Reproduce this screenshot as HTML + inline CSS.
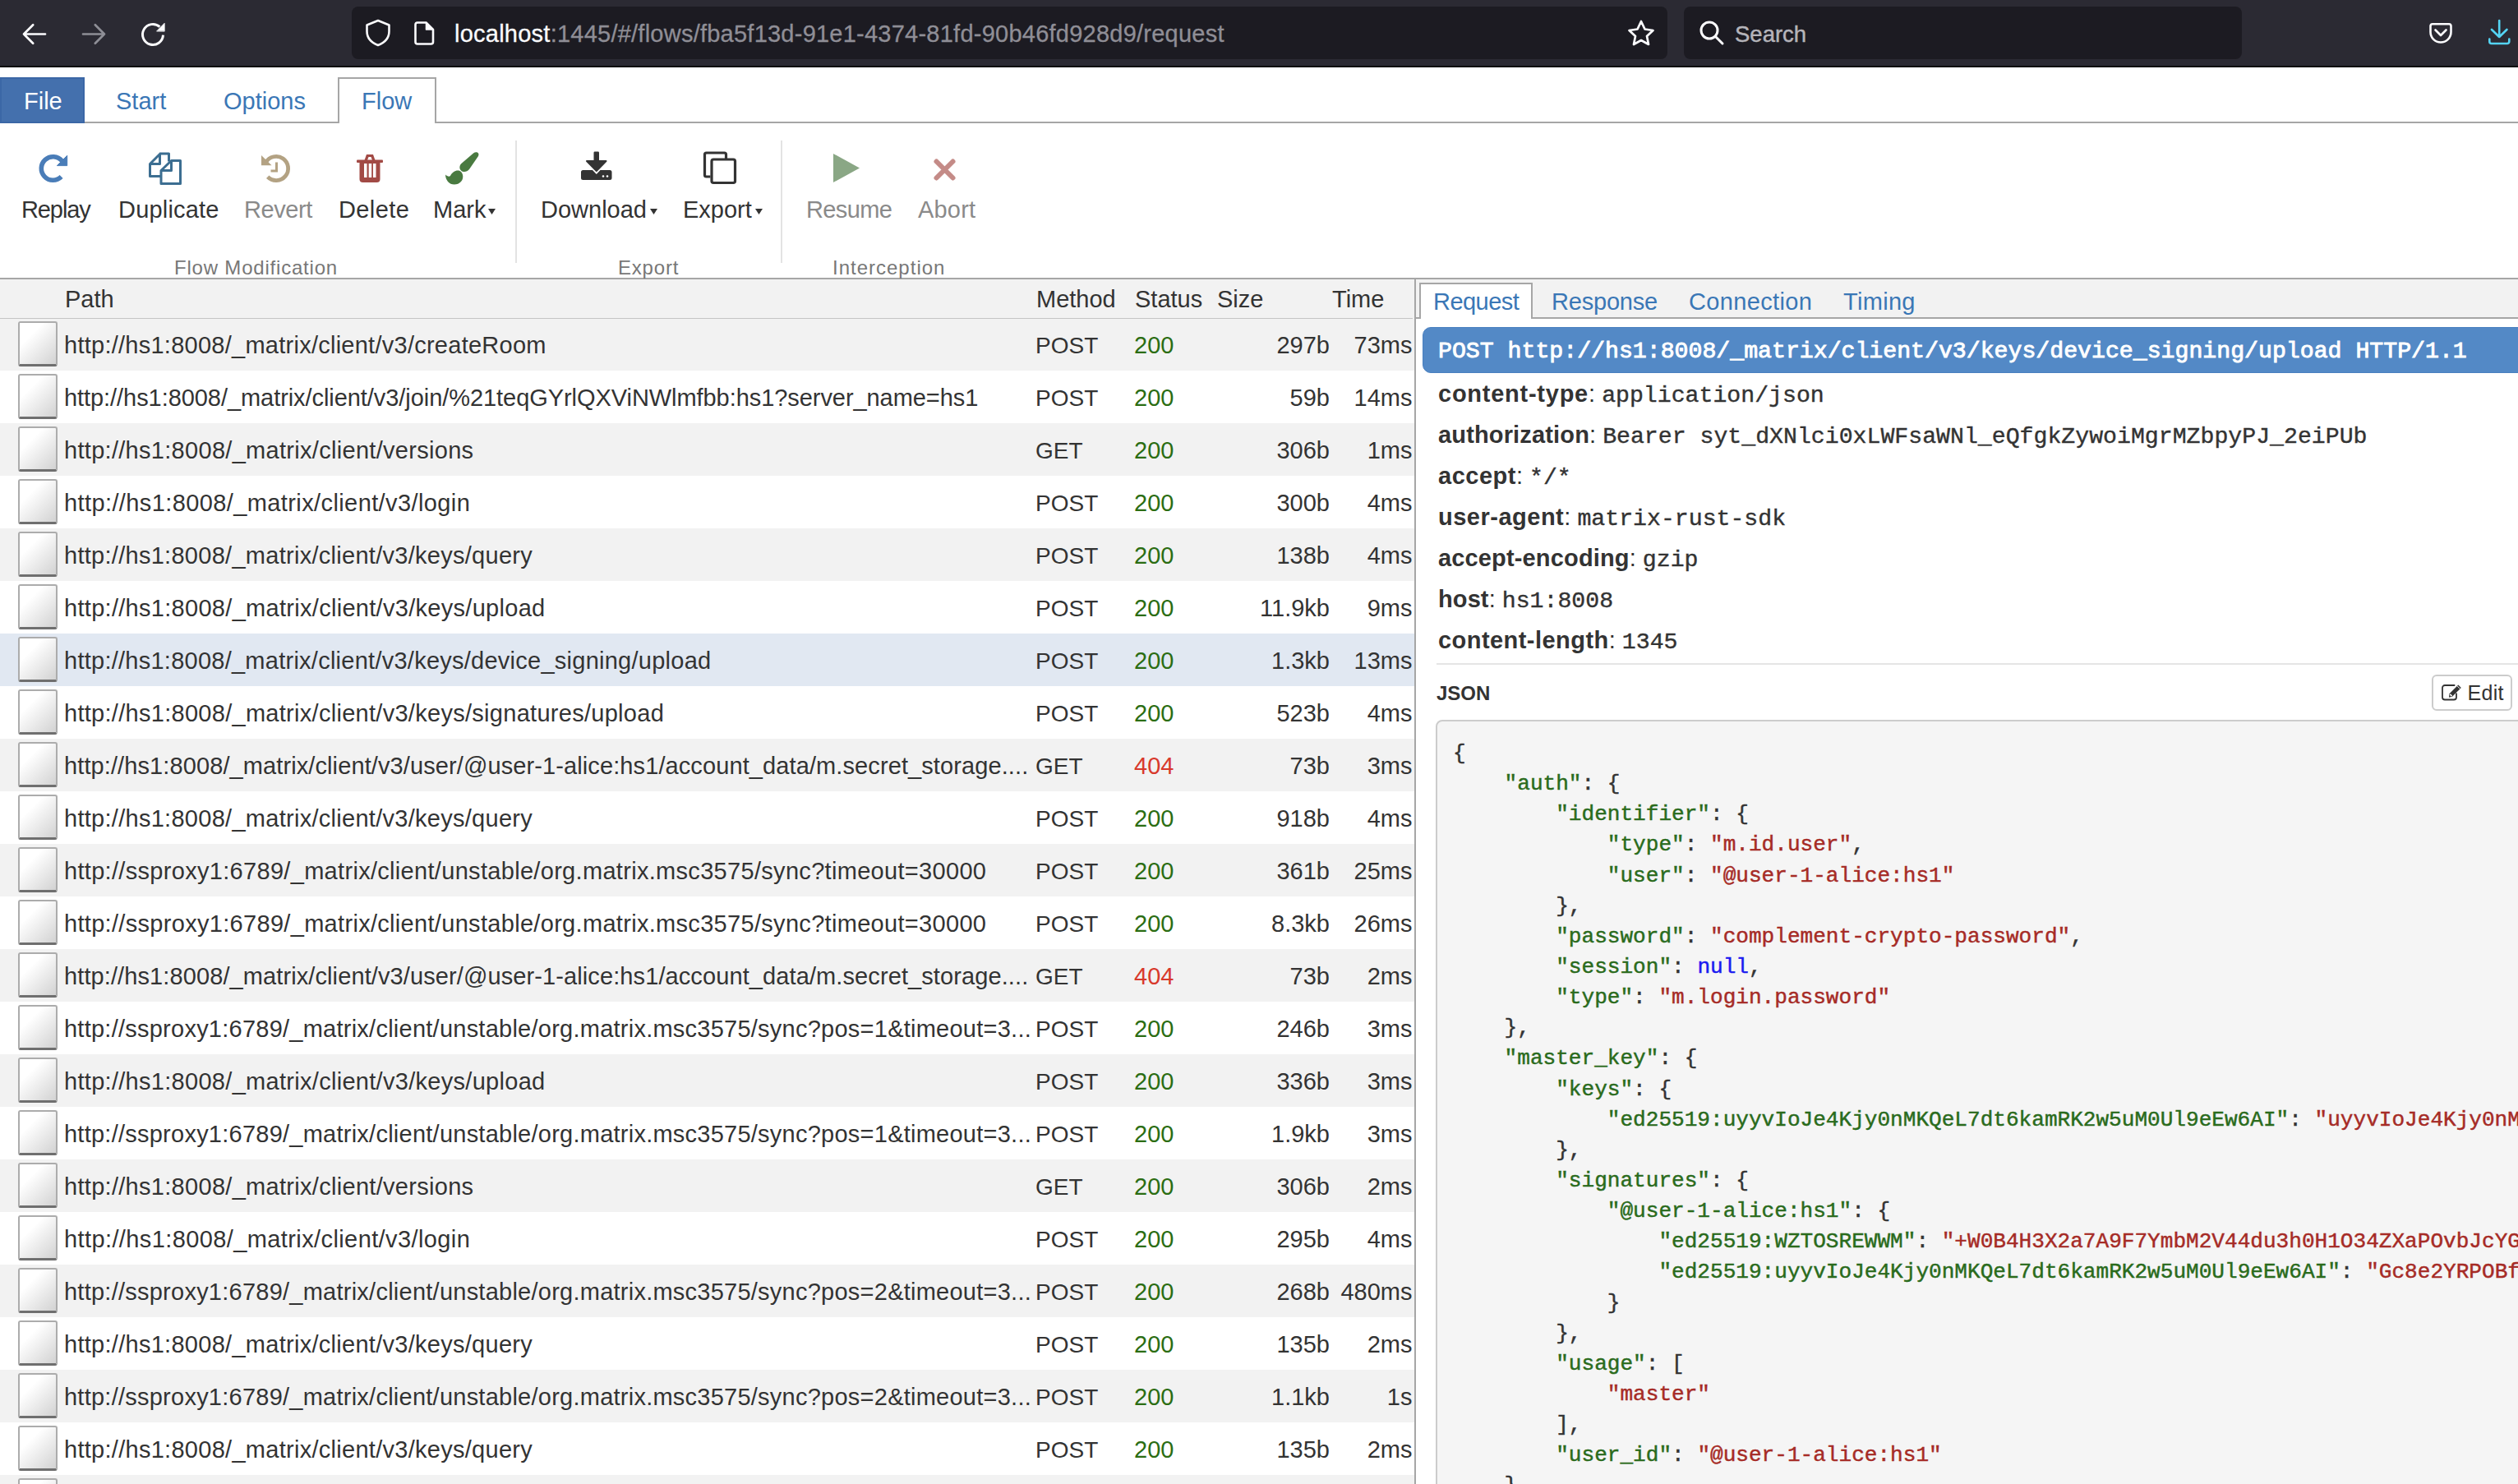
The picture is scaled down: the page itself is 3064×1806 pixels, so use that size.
<!DOCTYPE html>
<html><head><meta charset="utf-8"><style>
*{box-sizing:border-box;margin:0;padding:0}
html,body{width:3064px;height:1806px;overflow:hidden;background:#fff}
body{font-family:"Liberation Sans",sans-serif;color:#333;position:relative}
.a{position:absolute}
.tx{position:absolute;white-space:pre}
svg{position:absolute;overflow:visible}

.chk{position:absolute;left:22px;width:48px;height:55px;border-radius:3px;background:linear-gradient(135deg,#fff 30%,#d2d2d2 100%);border:2px solid #acacac;border-bottom:3px solid #6f6f6f}
.sz{text-align:right}
</style></head><body>
<div class="a" style="left:0;top:0;width:3064px;height:80px;background:#2b2a33"></div>
<div class="a" style="left:0;top:80px;width:3064px;height:2px;background:#0b0b0d"></div>
<div class="a" style="left:428px;top:8px;width:1601px;height:64px;background:#1c1b22;border-radius:8px"></div>
<div class="a" style="left:2049px;top:8px;width:679px;height:64px;background:#1c1b22;border-radius:8px"></div>
<svg style="left:0;top:0" width="3064" height="82"><g fill="none" stroke-linecap="round" stroke-linejoin="round" stroke-width="3.2"><path d="M29 41.5 H55 M40.2 30.3 L29 41.5 L40.2 52.7" stroke="#fbfbfe" stroke-width="2.7"/><path d="M101 41.5 H127 M115.8 30.3 L127 41.5 L115.8 52.7" stroke="#8e8e96" stroke-width="2.7"/><path d="M194.4 32.7 A12.5 12.5 0 1 0 198.5 42.7" stroke="#fbfbfe" stroke-width="3" stroke-linecap="butt"/><path d="M446.5 30.5 L460 25 L473.5 30.5 V38 C473.5 46.5 468 52 460 55 C452 52 446.5 46.5 446.5 38 Z" stroke="#fbfbfe" stroke-width="2.6"/><path d="M508 27.5 H518.5 L527 36 V51 A2.5 2.5 0 0 1 524.5 53.5 H508 A2.5 2.5 0 0 1 505.5 51 V30 A2.5 2.5 0 0 1 508 27.5 Z" stroke="#fbfbfe" stroke-width="2.6"/><path d="M518.5 27.5 L527 36 H518.5 Z" fill="#fbfbfe" stroke="#fbfbfe" stroke-width="1.5" stroke-linejoin="round"/><path d="M1997 26 L2001.5 35.5 L2011.5 37 L2004 44 L2006 54 L1997 49 L1988 54 L1990 44 L1982.5 37 L1992.5 35.5 Z" stroke="#fbfbfe" stroke-width="2.7"/><circle cx="2080" cy="37" r="10" stroke="#fbfbfe" stroke-width="3"/><path d="M2087.5 44.5 L2096 53" stroke="#fbfbfe" stroke-width="3"/><path d="M2960 29.3 H2980 A2.5 2.5 0 0 1 2982.5 31.8 V39 A12.5 12.5 0 0 1 2957.5 39 V31.8 A2.5 2.5 0 0 1 2960 29.3 Z M2963.5 36.5 L2970 43 L2976.5 36.5" stroke="#fbfbfe" stroke-width="2.6"/><path d="M3041.2 25 V45 M3032 36 L3041.2 45 L3050.4 36 M3029.3 47.5 V50.5 A2.5 2.5 0 0 0 3031.8 53 H3050.8 A2.5 2.5 0 0 0 3053.3 50.5 V47.5" stroke="#54d3f3" stroke-width="2.6"/><path d="M190.8 37.8 L200.2 28.2 L200.2 37.8 Z" fill="#fbfbfe" stroke="#fbfbfe" stroke-width="0.8" stroke-linejoin="miter"/></g></svg>

<div class="tx" style="left:553px;top:26.95px;font-size:29px;line-height:29px;color:#fbfbfe;letter-spacing:0.24px;-webkit-text-stroke:0.3px currentColor">localhost<span style="color:#8f8e96">:1445/#/flows/fba5f13d-91e1-4374-81fd-90b46fd928d9/request</span></div>
<div class="tx " style="left:2111px;top:27.92px;font-size:27.5px;line-height:27.5px;color:#b5b4ba;-webkit-text-stroke:0.45px #b5b4ba">Search</div>

<div class="a" style="left:0;top:148px;width:3064px;height:2px;background:#a6a6a6"></div>
<div class="a" style="left:0;top:94px;width:103px;height:56px;background:#4470ad;border:2px solid #3b67a6"></div>
<div class="a" style="left:411px;top:94px;width:120px;height:56px;background:#fff;border:2px solid #a6a6a6;border-bottom:none"></div>
<div class="tx " style="left:29px;top:109.45px;font-size:29px;line-height:29px;color:#fff">File</div>

<div class="tx " style="left:141px;top:109.45px;font-size:29px;line-height:29px;color:#3a77b6">Start</div>

<div class="tx " style="left:272px;top:109.45px;font-size:29px;line-height:29px;color:#3a77b6">Options</div>

<div class="tx " style="left:440px;top:109.45px;font-size:29px;line-height:29px;color:#3a77b6">Flow</div>

<div class="a" style="left:0;top:338px;width:3064px;height:2px;background:#a6a6a6"></div>
<div class="a" style="left:626.5px;top:171px;width:2px;height:149px;background:#e3e3e3"></div>
<div class="a" style="left:950px;top:171px;width:2px;height:149px;background:#e3e3e3"></div>
<div class="tx " style="left:26px;top:240.95px;font-size:29px;line-height:29px;color:#333;letter-spacing:-1.1px">Replay</div>

<div class="tx " style="left:144px;top:240.95px;font-size:29px;line-height:29px;color:#333;letter-spacing:0.2px">Duplicate</div>

<div class="tx " style="left:297px;top:240.95px;font-size:29px;line-height:29px;color:#8a8a8a;letter-spacing:-0.4px">Revert</div>

<div class="tx " style="left:412px;top:240.95px;font-size:29px;line-height:29px;color:#333;letter-spacing:0.4px">Delete</div>

<div class="tx " style="left:527px;top:240.95px;font-size:29px;line-height:29px;color:#333;letter-spacing:0px">Mark</div>

<div class="tx " style="left:658px;top:240.95px;font-size:29px;line-height:29px;color:#333;letter-spacing:0px">Download</div>

<div class="tx " style="left:831px;top:240.95px;font-size:29px;line-height:29px;color:#333;letter-spacing:0px">Export</div>

<div class="tx " style="left:981px;top:240.95px;font-size:29px;line-height:29px;color:#8a8a8a;letter-spacing:-0.6px">Resume</div>

<div class="tx " style="left:1117px;top:240.95px;font-size:29px;line-height:29px;color:#8a8a8a;letter-spacing:0.2px">Abort</div>

<svg style="left:594px;top:254px" width="10" height="8"><path d="M0 0 H9 L4.5 7 Z" fill="#333"/></svg>
<svg style="left:791px;top:254px" width="10" height="8"><path d="M0 0 H9 L4.5 7 Z" fill="#333"/></svg>
<svg style="left:919px;top:254px" width="10" height="8"><path d="M0 0 H9 L4.5 7 Z" fill="#333"/></svg>
<div class="tx " style="left:212px;top:313.68px;font-size:24px;line-height:24px;color:#777;letter-spacing:0.8px">Flow Modification</div>

<div class="tx " style="left:752px;top:313.68px;font-size:24px;line-height:24px;color:#777;letter-spacing:0.8px">Export</div>

<div class="tx " style="left:1013px;top:313.68px;font-size:24px;line-height:24px;color:#777;letter-spacing:1px">Interception</div>


<svg style="left:0;top:0" width="1200" height="340">
<!-- replay -->
<g fill="none" stroke="#4a7db8" stroke-width="5.6"><path d="M75.4 195.8 A14.25 14.25 0 1 0 74.6 215.1"/></g>
<path d="M69.4 201.6 L81.7 189.3 V201.6 Z" fill="#4a7db8" stroke="#4a7db8" stroke-width="1" stroke-linejoin="round"/>
<!-- duplicate -->
<g fill="none" stroke="#3c6e91" stroke-width="3" stroke-linejoin="round">
<path d="M194 187 H205.5 V196.5 M195 187 L182.5 199.5 V214.5 H196 M183 199.5 H194.5 V187"/>
<path d="M208.5 195.5 H219.5 V223.5 H196 V207.5 L208.5 195.5 Z M196.5 207.5 H208.5 V195.5"/>
</g>
<!-- revert (history) -->
<g fill="none" stroke="#b3a283" stroke-width="4.8"><path d="M323.4 197.7 A14.6 14.6 0 1 1 325.7 215.3"/></g>
<path d="M318 189 L330.6 201.2 H318 Z" fill="#b3a283"/>
<path d="M336.5 197.5 V208 H329.5" fill="none" stroke="#b3a283" stroke-width="3"/>
<!-- trash -->
<g fill="#a24a45">
<rect x="434" y="194.5" width="32" height="3.5" rx="1"/>
<path d="M443.5 195 L446 188 H454 L456.5 195 H453 L451.5 191 H448.5 L447 195 Z"/>
<path d="M437.5 198 H462.5 V218 A4 4 0 0 1 458.5 222 H441.5 A4 4 0 0 1 437.5 218 Z"/>
</g>
<g fill="#fff"><rect x="443" y="199" width="3.5" height="17"/><rect x="448.7" y="199" width="3.5" height="17"/><rect x="454" y="199" width="3.5" height="17"/></g>
<!-- brush -->
<path d="M576 186.5 C579.5 183.5 584 186 582 190 L571 206 C568.5 209.5 563.5 210 561 207.5 C558.5 205 559 201 562 198.5 Z" fill="#497a40"/>
<path d="M559.5 208 C564 210.5 564.5 217 561 221 C557 225.5 549 226 545 221 C543 218.5 542 215.5 542 212.5 C544 214.5 546.5 215.5 548 214 C550.5 209.5 555 206.5 559.5 208 Z" fill="#497a40"/>
<!-- download -->
<g fill="#333">
<rect x="722.5" y="184.5" width="6.5" height="14" rx="1.2"/>
<path d="M714 196 H737.5 L725.8 208 Z" stroke="#333" stroke-width="2" stroke-linejoin="round"/>
<path d="M709.5 207 H721 L725.8 212 L730.5 207 H742 A2.5 2.5 0 0 1 744.5 209.5 V216.5 A2.5 2.5 0 0 1 742 219 H709.5 A2.5 2.5 0 0 1 707 216.5 V209.5 A2.5 2.5 0 0 1 709.5 207 Z"/>
</g>
<circle cx="734" cy="214.5" r="1.3" fill="#fff"/><circle cx="739" cy="214.5" r="1.3" fill="#fff"/>
<!-- clone -->
<g fill="none" stroke="#333" stroke-width="3.2" stroke-linejoin="round">
<path d="M883.5 193 V188 A2 2 0 0 0 881.5 186 H859.5 A2 2 0 0 0 857.5 188 V213 A2 2 0 0 0 859.5 215 H864.5"/>
<rect x="866" y="194" width="28.5" height="28.5" rx="2.2"/>
</g>
<!-- play -->
<path d="M1014 187 L1046 204.5 L1014 222 Z" fill="#8aa785"/>
<!-- abort -->
<g stroke="#c48b87" stroke-width="6" stroke-linecap="round"><path d="M1139.5 196.5 L1159.5 216.5 M1159.5 196.5 L1139.5 216.5"/></g>
</svg>

<div class="a" style="left:0;top:340px;width:1721px;height:1466px;overflow:hidden">
<div class="a" style="left:0;top:0;width:1721px;height:47px;background:#f2f2f2"></div>
<div class="a" style="left:0;top:47px;width:1719px;height:1px;background:#c4c4c4;z-index:3"></div>
<div class="tx " style="left:79px;top:10.45px;font-size:29px;line-height:29px;">Path</div>

<div class="tx " style="left:1261px;top:10.45px;font-size:29px;line-height:29px;">Method</div>

<div class="tx " style="left:1381px;top:10.45px;font-size:29px;line-height:29px;">Status</div>

<div class="tx " style="left:1481px;top:10.45px;font-size:29px;line-height:29px;">Size</div>

<div class="tx " style="left:1621px;top:10.45px;font-size:29px;line-height:29px;">Time</div>

<div class="a" style="left:0;top:47px;width:1721px;height:64px;background:#f2f2f2"></div>
<div class="chk" style="top:51px"></div>
<div class="tx " style="left:78px;top:66.45px;font-size:29px;line-height:29px;letter-spacing:0.256px">http://hs1:8008/_matrix/client/v3/createRoom</div>

<div class="tx " style="left:1260px;top:67.30px;font-size:28px;line-height:28px;">POST</div>

<div class="tx " style="left:1380px;top:66.45px;font-size:29px;line-height:29px;color:#2b6d13">200</div>

<div class="tx " style="right:103px;top:66.45px;font-size:29px;line-height:29px;">297b</div>

<div class="tx " style="right:2.5px;top:66.45px;font-size:29px;line-height:29px;">73ms</div>

<div class="a" style="left:0;top:111px;width:1721px;height:64px;background:#fff"></div>
<div class="chk" style="top:115px"></div>
<div class="tx " style="left:78px;top:130.45px;font-size:29px;line-height:29px;letter-spacing:-0.063px">http://hs1:8008/_matrix/client/v3/join/%21teqGYrlQXViNWlmfbb:hs1?server_name=hs1</div>

<div class="tx " style="left:1260px;top:131.30px;font-size:28px;line-height:28px;">POST</div>

<div class="tx " style="left:1380px;top:130.45px;font-size:29px;line-height:29px;color:#2b6d13">200</div>

<div class="tx " style="right:103px;top:130.45px;font-size:29px;line-height:29px;">59b</div>

<div class="tx " style="right:2.5px;top:130.45px;font-size:29px;line-height:29px;">14ms</div>

<div class="a" style="left:0;top:175px;width:1721px;height:64px;background:#f2f2f2"></div>
<div class="chk" style="top:179px"></div>
<div class="tx " style="left:78px;top:194.45px;font-size:29px;line-height:29px;letter-spacing:0.297px">http://hs1:8008/_matrix/client/versions</div>

<div class="tx " style="left:1260px;top:195.30px;font-size:28px;line-height:28px;">GET</div>

<div class="tx " style="left:1380px;top:194.45px;font-size:29px;line-height:29px;color:#2b6d13">200</div>

<div class="tx " style="right:103px;top:194.45px;font-size:29px;line-height:29px;">306b</div>

<div class="tx " style="right:2.5px;top:194.45px;font-size:29px;line-height:29px;">1ms</div>

<div class="a" style="left:0;top:239px;width:1721px;height:64px;background:#fff"></div>
<div class="chk" style="top:243px"></div>
<div class="tx " style="left:78px;top:258.45px;font-size:29px;line-height:29px;letter-spacing:0.395px">http://hs1:8008/_matrix/client/v3/login</div>

<div class="tx " style="left:1260px;top:259.30px;font-size:28px;line-height:28px;">POST</div>

<div class="tx " style="left:1380px;top:258.45px;font-size:29px;line-height:29px;color:#2b6d13">200</div>

<div class="tx " style="right:103px;top:258.45px;font-size:29px;line-height:29px;">300b</div>

<div class="tx " style="right:2.5px;top:258.45px;font-size:29px;line-height:29px;">4ms</div>

<div class="a" style="left:0;top:303px;width:1721px;height:64px;background:#f2f2f2"></div>
<div class="chk" style="top:307px"></div>
<div class="tx " style="left:78px;top:322.45px;font-size:29px;line-height:29px;letter-spacing:0.279px">http://hs1:8008/_matrix/client/v3/keys/query</div>

<div class="tx " style="left:1260px;top:323.30px;font-size:28px;line-height:28px;">POST</div>

<div class="tx " style="left:1380px;top:322.45px;font-size:29px;line-height:29px;color:#2b6d13">200</div>

<div class="tx " style="right:103px;top:322.45px;font-size:29px;line-height:29px;">138b</div>

<div class="tx " style="right:2.5px;top:322.45px;font-size:29px;line-height:29px;">4ms</div>

<div class="a" style="left:0;top:367px;width:1721px;height:64px;background:#fff"></div>
<div class="chk" style="top:371px"></div>
<div class="tx " style="left:78px;top:386.45px;font-size:29px;line-height:29px;letter-spacing:0.295px">http://hs1:8008/_matrix/client/v3/keys/upload</div>

<div class="tx " style="left:1260px;top:387.30px;font-size:28px;line-height:28px;">POST</div>

<div class="tx " style="left:1380px;top:386.45px;font-size:29px;line-height:29px;color:#2b6d13">200</div>

<div class="tx " style="right:103px;top:386.45px;font-size:29px;line-height:29px;">11.9kb</div>

<div class="tx " style="right:2.5px;top:386.45px;font-size:29px;line-height:29px;">9ms</div>

<div class="a" style="left:0;top:431px;width:1721px;height:64px;background:#e1e8f2"></div>
<div class="chk" style="top:435px"></div>
<div class="tx " style="left:78px;top:450.45px;font-size:29px;line-height:29px;letter-spacing:0.254px">http://hs1:8008/_matrix/client/v3/keys/device_signing/upload</div>

<div class="tx " style="left:1260px;top:451.30px;font-size:28px;line-height:28px;">POST</div>

<div class="tx " style="left:1380px;top:450.45px;font-size:29px;line-height:29px;color:#2b6d13">200</div>

<div class="tx " style="right:103px;top:450.45px;font-size:29px;line-height:29px;">1.3kb</div>

<div class="tx " style="right:2.5px;top:450.45px;font-size:29px;line-height:29px;">13ms</div>

<div class="a" style="left:0;top:495px;width:1721px;height:64px;background:#fff"></div>
<div class="chk" style="top:499px"></div>
<div class="tx " style="left:78px;top:514.45px;font-size:29px;line-height:29px;letter-spacing:0.285px">http://hs1:8008/_matrix/client/v3/keys/signatures/upload</div>

<div class="tx " style="left:1260px;top:515.30px;font-size:28px;line-height:28px;">POST</div>

<div class="tx " style="left:1380px;top:514.45px;font-size:29px;line-height:29px;color:#2b6d13">200</div>

<div class="tx " style="right:103px;top:514.45px;font-size:29px;line-height:29px;">523b</div>

<div class="tx " style="right:2.5px;top:514.45px;font-size:29px;line-height:29px;">4ms</div>

<div class="a" style="left:0;top:559px;width:1721px;height:64px;background:#f2f2f2"></div>
<div class="chk" style="top:563px"></div>
<div class="tx " style="left:78px;top:578.45px;font-size:29px;line-height:29px;letter-spacing:0.101px">http://hs1:8008/_matrix/client/v3/user/@user-1-alice:hs1/account_data/m.secret_storage....</div>

<div class="tx " style="left:1260px;top:579.30px;font-size:28px;line-height:28px;">GET</div>

<div class="tx " style="left:1380px;top:578.45px;font-size:29px;line-height:29px;color:#d8392c">404</div>

<div class="tx " style="right:103px;top:578.45px;font-size:29px;line-height:29px;">73b</div>

<div class="tx " style="right:2.5px;top:578.45px;font-size:29px;line-height:29px;">3ms</div>

<div class="a" style="left:0;top:623px;width:1721px;height:64px;background:#fff"></div>
<div class="chk" style="top:627px"></div>
<div class="tx " style="left:78px;top:642.45px;font-size:29px;line-height:29px;letter-spacing:0.279px">http://hs1:8008/_matrix/client/v3/keys/query</div>

<div class="tx " style="left:1260px;top:643.30px;font-size:28px;line-height:28px;">POST</div>

<div class="tx " style="left:1380px;top:642.45px;font-size:29px;line-height:29px;color:#2b6d13">200</div>

<div class="tx " style="right:103px;top:642.45px;font-size:29px;line-height:29px;">918b</div>

<div class="tx " style="right:2.5px;top:642.45px;font-size:29px;line-height:29px;">4ms</div>

<div class="a" style="left:0;top:687px;width:1721px;height:64px;background:#f2f2f2"></div>
<div class="chk" style="top:691px"></div>
<div class="tx " style="left:78px;top:706.45px;font-size:29px;line-height:29px;letter-spacing:0.309px">http://ssproxy1:6789/_matrix/client/unstable/org.matrix.msc3575/sync?timeout=30000</div>

<div class="tx " style="left:1260px;top:707.30px;font-size:28px;line-height:28px;">POST</div>

<div class="tx " style="left:1380px;top:706.45px;font-size:29px;line-height:29px;color:#2b6d13">200</div>

<div class="tx " style="right:103px;top:706.45px;font-size:29px;line-height:29px;">361b</div>

<div class="tx " style="right:2.5px;top:706.45px;font-size:29px;line-height:29px;">25ms</div>

<div class="a" style="left:0;top:751px;width:1721px;height:64px;background:#fff"></div>
<div class="chk" style="top:755px"></div>
<div class="tx " style="left:78px;top:770.45px;font-size:29px;line-height:29px;letter-spacing:0.309px">http://ssproxy1:6789/_matrix/client/unstable/org.matrix.msc3575/sync?timeout=30000</div>

<div class="tx " style="left:1260px;top:771.30px;font-size:28px;line-height:28px;">POST</div>

<div class="tx " style="left:1380px;top:770.45px;font-size:29px;line-height:29px;color:#2b6d13">200</div>

<div class="tx " style="right:103px;top:770.45px;font-size:29px;line-height:29px;">8.3kb</div>

<div class="tx " style="right:2.5px;top:770.45px;font-size:29px;line-height:29px;">26ms</div>

<div class="a" style="left:0;top:815px;width:1721px;height:64px;background:#f2f2f2"></div>
<div class="chk" style="top:819px"></div>
<div class="tx " style="left:78px;top:834.45px;font-size:29px;line-height:29px;letter-spacing:0.101px">http://hs1:8008/_matrix/client/v3/user/@user-1-alice:hs1/account_data/m.secret_storage....</div>

<div class="tx " style="left:1260px;top:835.30px;font-size:28px;line-height:28px;">GET</div>

<div class="tx " style="left:1380px;top:834.45px;font-size:29px;line-height:29px;color:#d8392c">404</div>

<div class="tx " style="right:103px;top:834.45px;font-size:29px;line-height:29px;">73b</div>

<div class="tx " style="right:2.5px;top:834.45px;font-size:29px;line-height:29px;">2ms</div>

<div class="a" style="left:0;top:879px;width:1721px;height:64px;background:#fff"></div>
<div class="chk" style="top:883px"></div>
<div class="tx " style="left:78px;top:898.45px;font-size:29px;line-height:29px;letter-spacing:0.244px">http://ssproxy1:6789/_matrix/client/unstable/org.matrix.msc3575/sync?pos=1&amp;timeout=3...</div>

<div class="tx " style="left:1260px;top:899.30px;font-size:28px;line-height:28px;">POST</div>

<div class="tx " style="left:1380px;top:898.45px;font-size:29px;line-height:29px;color:#2b6d13">200</div>

<div class="tx " style="right:103px;top:898.45px;font-size:29px;line-height:29px;">246b</div>

<div class="tx " style="right:2.5px;top:898.45px;font-size:29px;line-height:29px;">3ms</div>

<div class="a" style="left:0;top:943px;width:1721px;height:64px;background:#f2f2f2"></div>
<div class="chk" style="top:947px"></div>
<div class="tx " style="left:78px;top:962.45px;font-size:29px;line-height:29px;letter-spacing:0.295px">http://hs1:8008/_matrix/client/v3/keys/upload</div>

<div class="tx " style="left:1260px;top:963.30px;font-size:28px;line-height:28px;">POST</div>

<div class="tx " style="left:1380px;top:962.45px;font-size:29px;line-height:29px;color:#2b6d13">200</div>

<div class="tx " style="right:103px;top:962.45px;font-size:29px;line-height:29px;">336b</div>

<div class="tx " style="right:2.5px;top:962.45px;font-size:29px;line-height:29px;">3ms</div>

<div class="a" style="left:0;top:1007px;width:1721px;height:64px;background:#fff"></div>
<div class="chk" style="top:1011px"></div>
<div class="tx " style="left:78px;top:1026.45px;font-size:29px;line-height:29px;letter-spacing:0.244px">http://ssproxy1:6789/_matrix/client/unstable/org.matrix.msc3575/sync?pos=1&amp;timeout=3...</div>

<div class="tx " style="left:1260px;top:1027.30px;font-size:28px;line-height:28px;">POST</div>

<div class="tx " style="left:1380px;top:1026.45px;font-size:29px;line-height:29px;color:#2b6d13">200</div>

<div class="tx " style="right:103px;top:1026.45px;font-size:29px;line-height:29px;">1.9kb</div>

<div class="tx " style="right:2.5px;top:1026.45px;font-size:29px;line-height:29px;">3ms</div>

<div class="a" style="left:0;top:1071px;width:1721px;height:64px;background:#f2f2f2"></div>
<div class="chk" style="top:1075px"></div>
<div class="tx " style="left:78px;top:1090.45px;font-size:29px;line-height:29px;letter-spacing:0.297px">http://hs1:8008/_matrix/client/versions</div>

<div class="tx " style="left:1260px;top:1091.30px;font-size:28px;line-height:28px;">GET</div>

<div class="tx " style="left:1380px;top:1090.45px;font-size:29px;line-height:29px;color:#2b6d13">200</div>

<div class="tx " style="right:103px;top:1090.45px;font-size:29px;line-height:29px;">306b</div>

<div class="tx " style="right:2.5px;top:1090.45px;font-size:29px;line-height:29px;">2ms</div>

<div class="a" style="left:0;top:1135px;width:1721px;height:64px;background:#fff"></div>
<div class="chk" style="top:1139px"></div>
<div class="tx " style="left:78px;top:1154.45px;font-size:29px;line-height:29px;letter-spacing:0.395px">http://hs1:8008/_matrix/client/v3/login</div>

<div class="tx " style="left:1260px;top:1155.30px;font-size:28px;line-height:28px;">POST</div>

<div class="tx " style="left:1380px;top:1154.45px;font-size:29px;line-height:29px;color:#2b6d13">200</div>

<div class="tx " style="right:103px;top:1154.45px;font-size:29px;line-height:29px;">295b</div>

<div class="tx " style="right:2.5px;top:1154.45px;font-size:29px;line-height:29px;">4ms</div>

<div class="a" style="left:0;top:1199px;width:1721px;height:64px;background:#f2f2f2"></div>
<div class="chk" style="top:1203px"></div>
<div class="tx " style="left:78px;top:1218.45px;font-size:29px;line-height:29px;letter-spacing:0.244px">http://ssproxy1:6789/_matrix/client/unstable/org.matrix.msc3575/sync?pos=2&amp;timeout=3...</div>

<div class="tx " style="left:1260px;top:1219.30px;font-size:28px;line-height:28px;">POST</div>

<div class="tx " style="left:1380px;top:1218.45px;font-size:29px;line-height:29px;color:#2b6d13">200</div>

<div class="tx " style="right:103px;top:1218.45px;font-size:29px;line-height:29px;">268b</div>

<div class="tx " style="right:2.5px;top:1218.45px;font-size:29px;line-height:29px;">480ms</div>

<div class="a" style="left:0;top:1263px;width:1721px;height:64px;background:#fff"></div>
<div class="chk" style="top:1267px"></div>
<div class="tx " style="left:78px;top:1282.45px;font-size:29px;line-height:29px;letter-spacing:0.279px">http://hs1:8008/_matrix/client/v3/keys/query</div>

<div class="tx " style="left:1260px;top:1283.30px;font-size:28px;line-height:28px;">POST</div>

<div class="tx " style="left:1380px;top:1282.45px;font-size:29px;line-height:29px;color:#2b6d13">200</div>

<div class="tx " style="right:103px;top:1282.45px;font-size:29px;line-height:29px;">135b</div>

<div class="tx " style="right:2.5px;top:1282.45px;font-size:29px;line-height:29px;">2ms</div>

<div class="a" style="left:0;top:1327px;width:1721px;height:64px;background:#f2f2f2"></div>
<div class="chk" style="top:1331px"></div>
<div class="tx " style="left:78px;top:1346.45px;font-size:29px;line-height:29px;letter-spacing:0.244px">http://ssproxy1:6789/_matrix/client/unstable/org.matrix.msc3575/sync?pos=2&amp;timeout=3...</div>

<div class="tx " style="left:1260px;top:1347.30px;font-size:28px;line-height:28px;">POST</div>

<div class="tx " style="left:1380px;top:1346.45px;font-size:29px;line-height:29px;color:#2b6d13">200</div>

<div class="tx " style="right:103px;top:1346.45px;font-size:29px;line-height:29px;">1.1kb</div>

<div class="tx " style="right:2.5px;top:1346.45px;font-size:29px;line-height:29px;">1s</div>

<div class="a" style="left:0;top:1391px;width:1721px;height:64px;background:#fff"></div>
<div class="chk" style="top:1395px"></div>
<div class="tx " style="left:78px;top:1410.45px;font-size:29px;line-height:29px;letter-spacing:0.279px">http://hs1:8008/_matrix/client/v3/keys/query</div>

<div class="tx " style="left:1260px;top:1411.30px;font-size:28px;line-height:28px;">POST</div>

<div class="tx " style="left:1380px;top:1410.45px;font-size:29px;line-height:29px;color:#2b6d13">200</div>

<div class="tx " style="right:103px;top:1410.45px;font-size:29px;line-height:29px;">135b</div>

<div class="tx " style="right:2.5px;top:1410.45px;font-size:29px;line-height:29px;">2ms</div>

<div class="a" style="left:0;top:1455px;width:1721px;height:64px;background:#f2f2f2"></div>
<div class="chk" style="top:1459px"></div>
</div>
<div class="a" style="left:1721px;top:340px;width:2px;height:1466px;background:#a6a6a6"></div>
<div class="a" style="left:1723px;top:340px;width:1341px;height:1466px;overflow:hidden">
<div class="a" style="left:0;top:0;width:1341px;height:47px;background:#f2f2f2"></div>
<div class="a" style="left:0;top:46px;width:1341px;height:2px;background:#a6a6a6"></div>
<div class="a" style="left:4px;top:4px;width:138px;height:44px;background:#fff;border:2px solid #a6a6a6;border-bottom:none"></div>
<div class="tx " style="left:21px;top:12.95px;font-size:29px;line-height:29px;color:#3a77b6;letter-spacing:-0.55px">Request</div>

<div class="tx " style="left:165px;top:12.95px;font-size:29px;line-height:29px;color:#3a77b6;letter-spacing:-0.2px">Response</div>

<div class="tx " style="left:332px;top:12.95px;font-size:29px;line-height:29px;color:#3a77b6;letter-spacing:0.35px">Connection</div>

<div class="tx " style="left:520px;top:12.95px;font-size:29px;line-height:29px;color:#3a77b6;letter-spacing:0.3px">Timing</div>

<div class="a" style="left:8px;top:58px;width:1400px;height:56px;background:#5389c6;border:1px solid #4a80c0;border-radius:10px"></div>
<div class="tx " style="left:27px;top:74.38px;font-size:28.2px;line-height:28.2px;font-family:'Liberation Mono',monospace;color:#fff;-webkit-text-stroke:0.9px #fff">POST http://hs1:8008/_matrix/client/v3/keys/device_signing/upload HTTP/1.1</div>

<div class="tx" style="left:27px;top:124.95px;font-size:29px;line-height:29px"><b style="letter-spacing:0.75px">content-type</b>: <span style="font-family:'Liberation Mono',monospace;font-size:28.2px;-webkit-text-stroke:0.4px currentColor">application/json</span></div>
<div class="tx" style="left:27px;top:174.95px;font-size:29px;line-height:29px"><b style="letter-spacing:0.15px">authorization</b>: <span style="font-family:'Liberation Mono',monospace;font-size:28.2px;-webkit-text-stroke:0.4px currentColor">Bearer syt_dXNlci0xLWFsaWNl_eQfgkZywoiMgrMZbpyPJ_2eiPUb</span></div>
<div class="tx" style="left:27px;top:224.95px;font-size:29px;line-height:29px"><b style="letter-spacing:0.5px">accept</b>: <span style="font-family:'Liberation Mono',monospace;font-size:28.2px;-webkit-text-stroke:0.4px currentColor">*/*</span></div>
<div class="tx" style="left:27px;top:274.95px;font-size:29px;line-height:29px"><b style="letter-spacing:0.5px">user-agent</b>: <span style="font-family:'Liberation Mono',monospace;font-size:28.2px;-webkit-text-stroke:0.4px currentColor">matrix-rust-sdk</span></div>
<div class="tx" style="left:27px;top:324.95px;font-size:29px;line-height:29px"><b style="letter-spacing:0.15px">accept-encoding</b>: <span style="font-family:'Liberation Mono',monospace;font-size:28.2px;-webkit-text-stroke:0.4px currentColor">gzip</span></div>
<div class="tx" style="left:27px;top:374.95px;font-size:29px;line-height:29px"><b style="letter-spacing:0.1px">host</b>: <span style="font-family:'Liberation Mono',monospace;font-size:28.2px;-webkit-text-stroke:0.4px currentColor">hs1:8008</span></div>
<div class="tx" style="left:27px;top:424.95px;font-size:29px;line-height:29px"><b style="letter-spacing:0.45px">content-length</b>: <span style="font-family:'Liberation Mono',monospace;font-size:28.2px;-webkit-text-stroke:0.4px currentColor">1345</span></div>
<div class="a" style="left:25px;top:467px;width:1400px;height:2px;background:#e5e5e5"></div>
<div class="tx " style="left:25px;top:491.68px;font-size:24px;line-height:24px;font-weight:bold">JSON</div>

<div class="a" style="left:1236px;top:481px;width:98px;height:44px;border:2px solid #ccc;border-radius:6px;background:#fff"></div>
<div class="tx " style="left:1279.5px;top:490.84px;font-size:25px;line-height:25px;letter-spacing:0.3px">Edit</div>

<svg style="left:1247px;top:491px" width="28" height="24"><path d="M17.3 3 H5 A3 3 0 0 0 2 6 V17.5 A3 3 0 0 0 5 20.5 H16 A3 3 0 0 0 19 17.5 V12.5" fill="none" stroke="#333" stroke-width="1.8"/><path d="M10 17.8 L10.5 13.3 L21.3 2.5 L24.8 6 L14 16.8 Z" fill="#333"/><path d="M20 3.8 L23.5 7.3" stroke="#fff" stroke-width="1"/><path d="M11.3 13.9 L13.5 16.1" stroke="#fff" stroke-width="1.6"/></svg>
<div class="a" style="left:24px;top:536px;width:1400px;height:1200px;background:#f5f5f5;border:2px solid #ccc;border-radius:8px"></div>
<div class="tx" style="left:45px;top:564.07px;font-size:26.08px;line-height:26px;font-family:'Liberation Mono',monospace;color:#333;-webkit-text-stroke:0.45px currentColor">{</div>
<div class="tx" style="left:45px;top:601.21px;font-size:26.08px;line-height:26px;font-family:'Liberation Mono',monospace;color:#333;-webkit-text-stroke:0.45px currentColor">    <span style="color:#2a6b1c">"auth"</span>: {</div>
<div class="tx" style="left:45px;top:638.35px;font-size:26.08px;line-height:26px;font-family:'Liberation Mono',monospace;color:#333;-webkit-text-stroke:0.45px currentColor">        <span style="color:#2a6b1c">"identifier"</span>: {</div>
<div class="tx" style="left:45px;top:675.49px;font-size:26.08px;line-height:26px;font-family:'Liberation Mono',monospace;color:#333;-webkit-text-stroke:0.45px currentColor">            <span style="color:#2a6b1c">"type"</span>: <span style="color:#a62b26">"m.id.user"</span>,</div>
<div class="tx" style="left:45px;top:712.63px;font-size:26.08px;line-height:26px;font-family:'Liberation Mono',monospace;color:#333;-webkit-text-stroke:0.45px currentColor">            <span style="color:#2a6b1c">"user"</span>: <span style="color:#a62b26">"@user-1-alice:hs1"</span></div>
<div class="tx" style="left:45px;top:749.77px;font-size:26.08px;line-height:26px;font-family:'Liberation Mono',monospace;color:#333;-webkit-text-stroke:0.45px currentColor">        },</div>
<div class="tx" style="left:45px;top:786.91px;font-size:26.08px;line-height:26px;font-family:'Liberation Mono',monospace;color:#333;-webkit-text-stroke:0.45px currentColor">        <span style="color:#2a6b1c">"password"</span>: <span style="color:#a62b26">"complement-crypto-password"</span>,</div>
<div class="tx" style="left:45px;top:824.05px;font-size:26.08px;line-height:26px;font-family:'Liberation Mono',monospace;color:#333;-webkit-text-stroke:0.45px currentColor">        <span style="color:#2a6b1c">"session"</span>: <span style="color:#1a1af0">null</span>,</div>
<div class="tx" style="left:45px;top:861.19px;font-size:26.08px;line-height:26px;font-family:'Liberation Mono',monospace;color:#333;-webkit-text-stroke:0.45px currentColor">        <span style="color:#2a6b1c">"type"</span>: <span style="color:#a62b26">"m.login.password"</span></div>
<div class="tx" style="left:45px;top:898.33px;font-size:26.08px;line-height:26px;font-family:'Liberation Mono',monospace;color:#333;-webkit-text-stroke:0.45px currentColor">    },</div>
<div class="tx" style="left:45px;top:935.47px;font-size:26.08px;line-height:26px;font-family:'Liberation Mono',monospace;color:#333;-webkit-text-stroke:0.45px currentColor">    <span style="color:#2a6b1c">"master_key"</span>: {</div>
<div class="tx" style="left:45px;top:972.61px;font-size:26.08px;line-height:26px;font-family:'Liberation Mono',monospace;color:#333;-webkit-text-stroke:0.45px currentColor">        <span style="color:#2a6b1c">"keys"</span>: {</div>
<div class="tx" style="left:45px;top:1009.75px;font-size:26.08px;line-height:26px;font-family:'Liberation Mono',monospace;color:#333;-webkit-text-stroke:0.45px currentColor">            <span style="color:#2a6b1c">"ed25519:uyyvIoJe4Kjy0nMKQeL7dt6kamRK2w5uM0Ul9eEw6AI"</span>: <span style="color:#a62b26">"uyyvIoJe4Kjy0nMKQeL7dt6kamRK2w5uM0Ul9eEw6AI"</span></div>
<div class="tx" style="left:45px;top:1046.89px;font-size:26.08px;line-height:26px;font-family:'Liberation Mono',monospace;color:#333;-webkit-text-stroke:0.45px currentColor">        },</div>
<div class="tx" style="left:45px;top:1084.03px;font-size:26.08px;line-height:26px;font-family:'Liberation Mono',monospace;color:#333;-webkit-text-stroke:0.45px currentColor">        <span style="color:#2a6b1c">"signatures"</span>: {</div>
<div class="tx" style="left:45px;top:1121.17px;font-size:26.08px;line-height:26px;font-family:'Liberation Mono',monospace;color:#333;-webkit-text-stroke:0.45px currentColor">            <span style="color:#2a6b1c">"@user-1-alice:hs1"</span>: {</div>
<div class="tx" style="left:45px;top:1158.31px;font-size:26.08px;line-height:26px;font-family:'Liberation Mono',monospace;color:#333;-webkit-text-stroke:0.45px currentColor">                <span style="color:#2a6b1c">"ed25519:WZTOSREWWM"</span>: <span style="color:#a62b26">"+W0B4H3X2a7A9F7YmbM2V44du3h0H1O34ZXaPOvbJcYGxkq0Ji7a0eA2mGpD8dMkE"</span>,</div>
<div class="tx" style="left:45px;top:1195.45px;font-size:26.08px;line-height:26px;font-family:'Liberation Mono',monospace;color:#333;-webkit-text-stroke:0.45px currentColor">                <span style="color:#2a6b1c">"ed25519:uyyvIoJe4Kjy0nMKQeL7dt6kamRK2w5uM0Ul9eEw6AI"</span>: <span style="color:#a62b26">"Gc8e2YRPOBfJk3aQpL0bC9xWvT4mN7sR2uD6hY1eZ"</span></div>
<div class="tx" style="left:45px;top:1232.59px;font-size:26.08px;line-height:26px;font-family:'Liberation Mono',monospace;color:#333;-webkit-text-stroke:0.45px currentColor">            }</div>
<div class="tx" style="left:45px;top:1269.73px;font-size:26.08px;line-height:26px;font-family:'Liberation Mono',monospace;color:#333;-webkit-text-stroke:0.45px currentColor">        },</div>
<div class="tx" style="left:45px;top:1306.87px;font-size:26.08px;line-height:26px;font-family:'Liberation Mono',monospace;color:#333;-webkit-text-stroke:0.45px currentColor">        <span style="color:#2a6b1c">"usage"</span>: [</div>
<div class="tx" style="left:45px;top:1344.01px;font-size:26.08px;line-height:26px;font-family:'Liberation Mono',monospace;color:#333;-webkit-text-stroke:0.45px currentColor">            <span style="color:#a62b26">"master"</span></div>
<div class="tx" style="left:45px;top:1381.15px;font-size:26.08px;line-height:26px;font-family:'Liberation Mono',monospace;color:#333;-webkit-text-stroke:0.45px currentColor">        ],</div>
<div class="tx" style="left:45px;top:1418.29px;font-size:26.08px;line-height:26px;font-family:'Liberation Mono',monospace;color:#333;-webkit-text-stroke:0.45px currentColor">        <span style="color:#2a6b1c">"user_id"</span>: <span style="color:#a62b26">"@user-1-alice:hs1"</span></div>
<div class="tx" style="left:45px;top:1455.43px;font-size:26.08px;line-height:26px;font-family:'Liberation Mono',monospace;color:#333;-webkit-text-stroke:0.45px currentColor">    },</div>
</div>
</body></html>
